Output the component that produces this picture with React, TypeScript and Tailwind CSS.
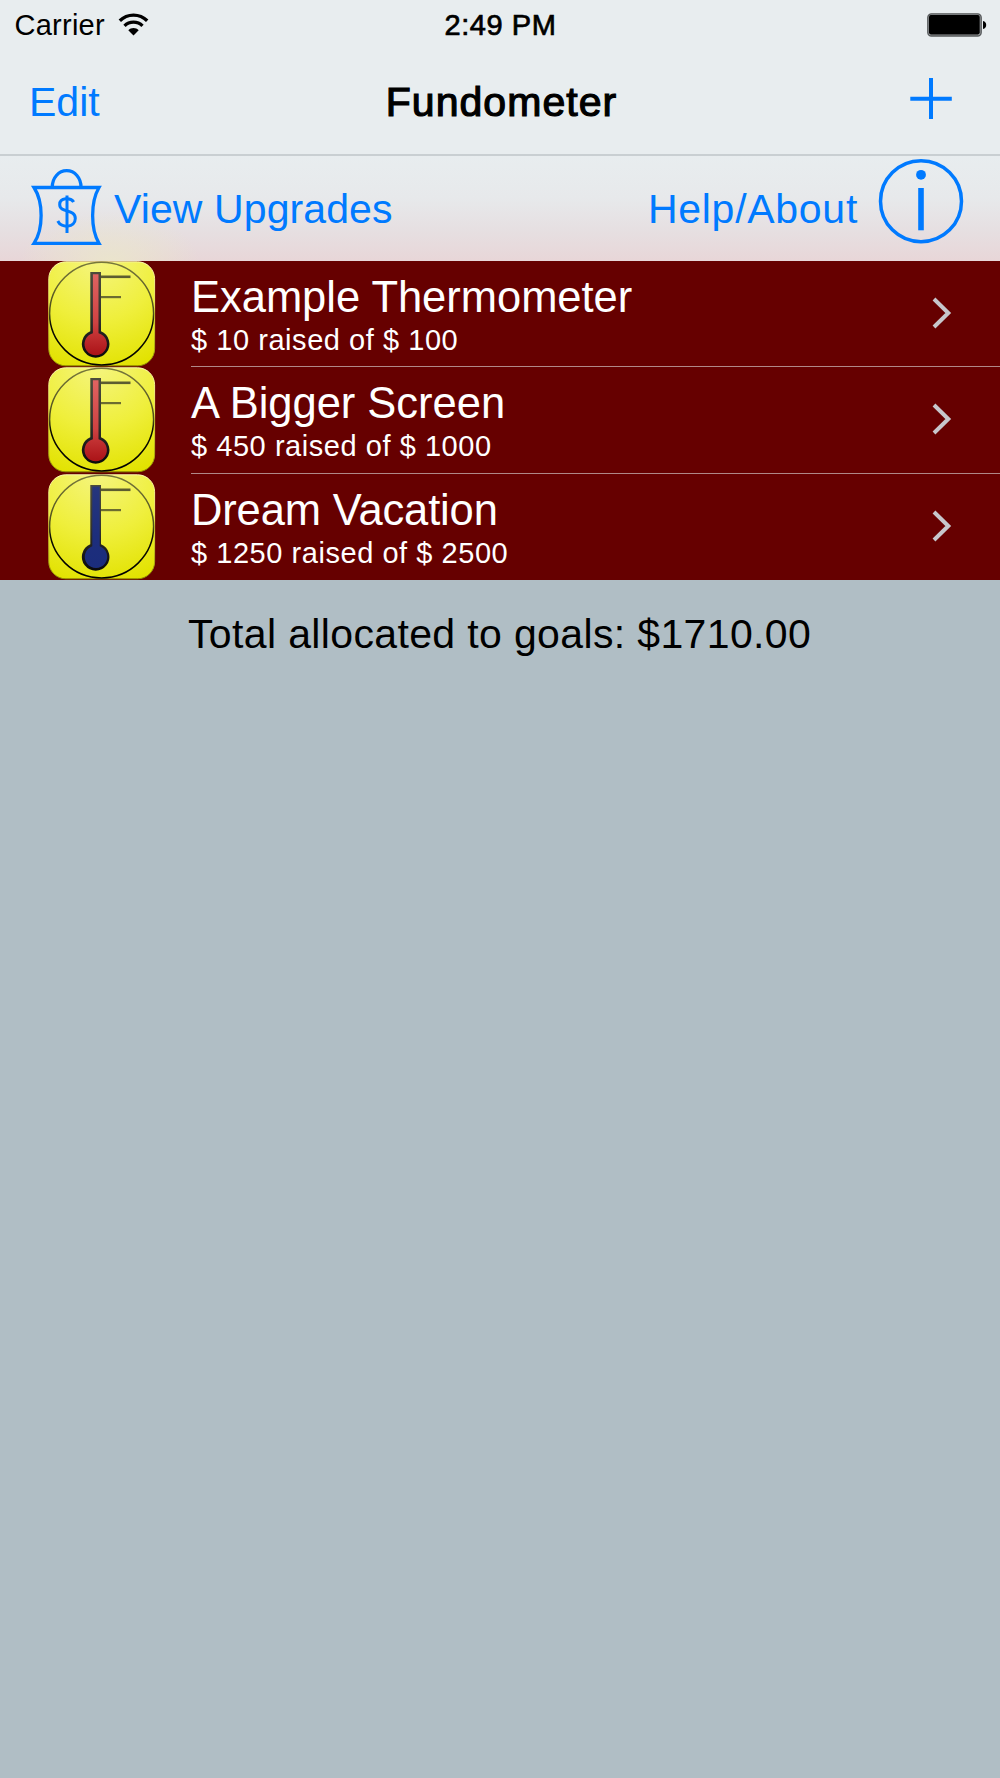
type Goal = {
  title: string;
  detail: string;
  color: "red" | "blue";
  titleClass: string;
};

const goals: Goal[] = [
  { title: "Example Thermometer", detail: "$ 10 raised of $ 100", color: "red", titleClass: "tracking-[-0.02px]" },
  { title: "A Bigger Screen", detail: "$ 450 raised of $ 1000", color: "red", titleClass: "tracking-[-0.02px]" },
  { title: "Dream Vacation", detail: "$ 1250 raised of $ 2500", color: "blue", titleClass: "tracking-[-0.14px]" },
];

function WifiIcon() {
  return (
    <svg className="ml-[12px] h-[24px] w-[32px] shrink-0" viewBox="117 12.5 32 24" fill="none" stroke="#000">
      <path d="M119.800 20.2C127.400 12.700 139.600 12.700 147.200 20.200" strokeWidth="3.400" />
      <path d="M124.500 25.300C129.400 20.400 137.600 20.400 142.500 25.300" strokeWidth="3.300" />
      <path d="M128.300 29.800C131 26.800 136 26.800 138.700 29.800L133.500 34.900Z" fill="#000" stroke="none" />
    </svg>
  );
}

function BatteryIcon() {
  return (
    <svg className="h-[26px] w-[60px]" viewBox="927 12 60 26">
      <rect x="927.800" y="13.800" width="53.400" height="22.200" rx="3.600" fill="#9a9d9e" stroke="#55585a" strokeWidth="1.300" />
      <rect x="929" y="15.100" width="50.700" height="19.300" rx="1.800" fill="#000" />
      <path d="M983 21C985.200 21.500 986.200 23 986.200 25S985.200 28.500 983 29Z" fill="#000" />
    </svg>
  );
}

function PlusIcon() {
  return (
    <svg className="h-[42px] w-[42px]" viewBox="910 78 42 42" stroke="#007aff" strokeWidth="4">
      <path d="M910.300 98.700H951.800M931 78V119" />
    </svg>
  );
}

function BagIcon() {
  return (
    <svg className="h-[80px] w-[72px]" viewBox="30 167 72 80" fill="none" stroke="#007aff">
      <path d="M52.300 187C52.300 178 58.500 170.700 66.700 170.700S81 178 81 187" strokeWidth="3.300" />
      <path d="M34 187.500H99C90.500 202 90.500 229 99 243.300H34C43.500 229 43.500 202 34 187.500Z" strokeWidth="3.300" />
      <path d="M67 195.500V233" strokeWidth="3" />
      <path
        d="M73.700 202C71 197.300 59.700 197.300 59.700 204.500C59.700 213.500 75.300 208.500 75.300 218.500C75.300 227.500 61.500 229 57.800 221"
        strokeWidth="3"
      />
    </svg>
  );
}

function InfoIcon() {
  return (
    <svg className="h-[86px] w-[86px]" viewBox="878 158 86 86">
      <circle cx="921" cy="201.200" r="40.500" fill="none" stroke="#007aff" strokeWidth="3.500" />
      <circle cx="921" cy="174.800" r="4.900" fill="#007aff" />
      <rect x="918.200" y="188" width="5.600" height="42.300" fill="#007aff" />
    </svg>
  );
}

function ThermometerIcon({ color }: { color: "red" | "blue" }) {
  const isRed = color === "red";
  return (
    <svg className="ml-[48px] h-[106px] w-[108px] shrink-0" viewBox="0 0 108 106">
      <defs>
        <radialGradient id={`tile-${color}`} gradientUnits="userSpaceOnUse" cx="50" cy="-4" r="115">
          <stop offset="0" stopColor="#f5f582" />
          <stop offset="0.550" stopColor="#efef3c" />
          <stop offset="1" stopColor="#e2e200" />
        </radialGradient>
        <linearGradient id={`ring-${color}`} x1="0" y1="0" x2="0" y2="1">
          <stop offset="0" stopColor="#77773c" />
          <stop offset="0.500" stopColor="#4b4b18" />
          <stop offset="0.600" stopColor="#0c0c00" />
          <stop offset="1" stopColor="#000" />
        </linearGradient>
        <linearGradient id={`case-${color}`} gradientUnits="userSpaceOnUse" x1="0" y1="10" x2="0" y2="97">
          <stop offset="0" stopColor="#4c4c3c" />
          <stop offset="0.500" stopColor="#333330" />
          <stop offset="1" stopColor="#0a0a0a" />
        </linearGradient>
        <linearGradient id={`fluid-${color}`} gradientUnits="userSpaceOnUse" x1="0" y1="12" x2="0" y2="95">
          <stop offset="0" stopColor={isRed ? "#e06462" : "#26367c"} />
          <stop offset="0.600" stopColor={isRed ? "#cf4242" : "#1d2e7c"} />
          <stop offset="1" stopColor={isRed ? "#aa1216" : "#1b2d7c"} />
        </linearGradient>
        <linearGradient id={`edge-${color}`} x1="0" y1="0" x2="0" y2="1">
          <stop offset="0" stopColor="#fafab0" />
          <stop offset="0.500" stopColor="#e4e440" />
          <stop offset="1" stopColor="#8f8f00" />
        </linearGradient>
      </defs>
      <rect x="0.800" y="0.800" width="105.800" height="104" rx="17" fill={`url(#tile-${color})`} stroke={`url(#edge-${color})`} strokeWidth="1" />
      <ellipse cx="53.600" cy="52.600" rx="52" ry="51.300" fill="none" stroke={`url(#ring-${color})`} strokeWidth="1.500" />
      <path d="M52 15.800H82.500" stroke="#5c5c30" strokeWidth="2.600" />
      <path d="M52 36.100H73" stroke="#6c6c30" strokeWidth="2.200" />
      <path d="M42.300 11.100H53V70.200A13.800 13.800 0 1 1 42.300 70.200Z" fill={`url(#case-${color})`} />
      <path
        d={isRed ? "M44.900 13.200H50.500V72.200A11.200 11.200 0 1 1 44.900 72.200Z" : "M44.300 12.500H51.700V72.300A11.200 11.200 0 1 1 44.300 72.300Z"}
        fill={`url(#fluid-${color})`}
      />
    </svg>
  );
}

function GoalRow({ goal, last }: { goal: Goal; last: boolean }) {
  return (
    <li className="flex h-[106.330px] items-start">
      <ThermometerIcon color={goal.color} />
      <div className={`ml-[35px] flex h-full flex-1 items-start justify-between border-b ${last ? "border-transparent" : "border-[#b08888]"}`}>
        <div className="whitespace-nowrap pt-3">
          <h2 className={`text-[43.500px] leading-[48px] ${goal.titleClass}`}>{goal.title}</h2>
          <p className="text-[29px] leading-[38px] tracking-[0.545px]">{goal.detail}</p>
        </div>
        <svg className="mr-[48px] mt-[35px] h-[34px] w-5" viewBox="0 0 20 34" fill="none" stroke="#c7c7cc" strokeWidth="4">
          <path d="M2 3L16.300 17L2 31" />
        </svg>
      </div>
    </li>
  );
}

export default function App() {
  return (
    <div className="flex min-h-[1778px] w-[1000px] flex-col bg-[#b0bec5] font-['Liberation_Sans',Arial,sans-serif] text-black">
      <header className="flex h-[154px] flex-col bg-[#e8edef]">
        <div className="grid h-[50px] grid-cols-3 items-center text-[29px] leading-[50px]">
          <div className="flex items-center pl-[14.500px]">
            <span className="tracking-[0.250px]">Carrier</span>
            <WifiIcon />
          </div>
          <span className="pl-px text-center tracking-[0.550px] [-webkit-text-stroke:0.700px_#000]">2:49 PM</span>
          <div className="flex justify-end pr-[13px]">
            <BatteryIcon />
          </div>
        </div>
        <nav className="grid h-[104px] grid-cols-3 items-center text-[41px] leading-[50px]">
          <a className="pl-[29px] text-[#007aff]">Edit</a>
          <h1 className="pl-[3px] text-center tracking-[1.050px] [-webkit-text-stroke:1.200px_#000]">Fundometer</h1>
          <button className="-mt-[6px] mr-[48px] justify-self-end">
            <PlusIcon />
          </button>
        </nav>
      </header>

      <div className="flex h-[107px] items-center justify-between border-t-2 border-[#c9cfd2] bg-[radial-gradient(ellipse_90px_50px_at_110px_106px,rgba(235,233,200,0.75),rgba(235,233,200,0)),linear-gradient(to_bottom,#e8edef_0%,#e7e9eb_40%,#e6dfe1_72%,#e8d6d8_100%)] text-[41px] leading-[50px] text-[#007aff]">
        <a className="flex items-center pl-[30px]">
          <span className="-mt-[4px]">
            <BagIcon />
          </span>
          <span className="ml-3 tracking-[0.100px]">View Upgrades</span>
        </a>
        <a className="flex items-center pr-[36px]">
          <span className="mr-[20px] tracking-[0.720px]">Help/About</span>
          <span className="-mt-[15px]">
            <InfoIcon />
          </span>
        </a>
      </div>

      <ul className="bg-[#660000] text-white">
        {goals.map((goal, i) => (
          <GoalRow key={goal.title} goal={goal} last={i === goals.length - 1} />
        ))}
      </ul>

      <p className="whitespace-nowrap pl-[188px] text-[41px] leading-[109px] tracking-[0.361px]">Total allocated to goals: $1710.00</p>
    </div>
  );
}
